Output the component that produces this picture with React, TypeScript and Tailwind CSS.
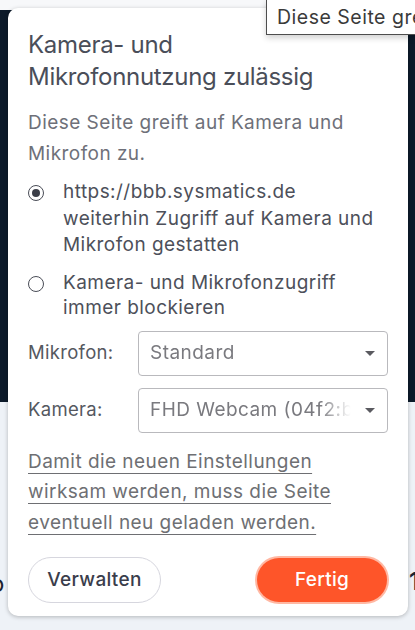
const Radio = ({ checked }: { checked: boolean }) => (
    <span className="mt-[6px] flex h-[16px] w-[16px] shrink-0 items-center justify-center rounded-full border-[1.5px] border-[#4a4d57]">
        {checked && <span className="h-[8px] w-[8px] rounded-full bg-[#3b3e48]" />}
    </span>
)

const Select = ({ value }: { value: string }) => (
    <div className="flex h-[45px] flex-1 items-center overflow-hidden rounded-[4px] border border-[#b9b9bd] pl-[11px] pr-[12px]">
        <span className="flex-1 overflow-hidden whitespace-nowrap pr-[6px] text-[19px] tracking-[0.45px] text-[#7a7a7f] [mask-image:linear-gradient(to_right,black_82%,transparent_97%)]">
            {value}
        </span>
        <svg viewBox="0 0 10 5" className="ml-2 h-[5px] w-[10px] shrink-0 fill-[#5a5a60]">
            <path d="M0 0 L10 0 L5 5 Z" />
        </svg>
    </div>
)

const App = () => {
    return (
        <div
            className="relative h-[630px] w-[415px] overflow-hidden bg-[#eef2f7]"
            style={{ fontFamily: 'Inter, "Noto Sans", sans-serif' }}
        >
            {/* page behind the popup */}
            <div className="h-[10px] bg-[#f7f8fa]" />
            <div className="h-[392px] bg-[#0c1a2a]" />
            <span className="absolute left-[409px] top-[564px] text-[24px] font-semibold text-[#1c2330]">1</span>
            <span className="absolute left-[-10px] top-[566px] text-[24px] text-[#1c2330]">o</span>

            {/* tooltip */}
            <div className="absolute left-[266px] top-[-1px] z-20 h-[36px] w-[170px] border border-[#4d4d4d] bg-white pl-[10px] pt-[5px] text-[19.5px] leading-[24px] tracking-[0.5px] whitespace-nowrap text-[#3a3a3a] shadow-[0_3px_6px_rgba(0,0,0,0.18)]">
                Diese Seite greift auf Kamera und Mikrofon zu.
            </div>

            {/* popup */}
            <div className="absolute left-[8px] top-[8px] z-10 flex h-[608px] w-[400px] flex-col rounded-[10px] bg-white px-[20px] pt-[21px] shadow-[0_1px_4px_rgba(0,0,0,0.25)]">
                <h2 className="text-[24px] leading-[32px] tracking-[-0.3px] text-[#4a4e59]">
                    Kamera- und
                    <br />
                    Mikrofonnutzung zulässig
                </h2>
                <p className="mt-[14px] text-[19px] leading-[31px] tracking-[0.45px] text-[#6e7079]">
                    Diese Seite greift auf Kamera und
                    <br />
                    Mikrofon zu.
                </p>

                <div className="mt-[10px] flex gap-[19px]">
                    <Radio checked />
                    <p className="text-[19px] leading-[26.5px] tracking-[0.45px] text-[#4d505a]">
                        https://bbb.sysmatics.de
                        <br />
                        weiterhin Zugriff auf Kamera und
                        <br />
                        Mikrofon gestatten
                    </p>
                </div>
                <div className="mt-[11px] flex gap-[19px]">
                    <Radio checked={false} />
                    <p className="text-[19px] leading-[25px] tracking-[0.45px] text-[#4d505a]">
                        Kamera- und Mikrofonzugriff
                        <br />
                        immer blockieren
                    </p>
                </div>

                <div className="mt-[11px] flex items-center">
                    <span className="w-[110px] text-[18.5px] tracking-[0.3px] text-[#55585f]">Mikrofon:</span>
                    <Select value="Standard" />
                </div>
                <div className="mt-[12px] flex items-center">
                    <span className="w-[110px] text-[18.5px] tracking-[0.3px] text-[#55585f]">Kamera:</span>
                    <Select value="FHD Webcam (04f2:b6dd)" />
                </div>

                <p className="mt-[14px] text-[19px] leading-[30.5px] tracking-[0.45px] text-[#6e6f73] underline decoration-[#6e6f73] underline-offset-[5px]">
                    Damit die neuen Einstellungen
                    <br />
                    wirksam werden, muss die Seite
                    <br />
                    eventuell neu geladen werden.
                </p>

                <div className="mt-[19px] flex items-center justify-between">
                    <button className="h-[46px] w-[133px] rounded-full border border-[#d6d6de] text-[19px] font-medium tracking-[0.3px] text-[#3a3d4b]">
                        Verwalten
                    </button>
                    <button className="mr-[1px] h-[44px] w-[130px] rounded-full bg-[#fe5529] text-[19px] font-medium tracking-[0.3px] text-white shadow-[0_0_0_2px_#ffb8a3]">
                        Fertig
                    </button>
                </div>
            </div>
        </div>
    )
}

export default App
